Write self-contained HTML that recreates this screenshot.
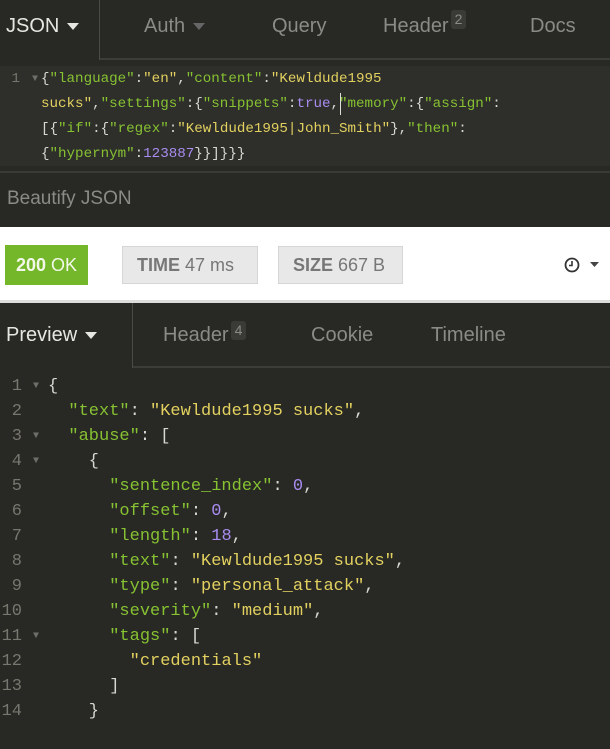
<!DOCTYPE html>
<html><head><meta charset="utf-8"><style>
*{margin:0;padding:0;box-sizing:border-box}
body{width:610px;height:729px;overflow:hidden;background:#282824;font-family:"Liberation Sans",sans-serif;position:relative}
.abs{position:absolute}
.tab{position:absolute;top:0;height:58px;line-height:52px;font-size:20px;color:#8a8a86}
.mono{font-family:"Liberation Mono","DejaVu Sans Mono",monospace;white-space:pre}
.k{color:#86c232}.s{color:#e2d160}.n{color:#a88cf0}.p{color:#d8d8d2}
.ln{position:absolute;width:22px;text-align:right;color:#77776f}
.ar{position:absolute;color:#6f6f69;font-size:10px}
.badge{display:inline-block;background:#3a3a36;color:#8a8a86;font-size:14px;line-height:19px;padding:0 4px;border-radius:3px;vertical-align:top;margin-top:-2px;margin-left:2px}
.box{position:absolute;top:246px;height:38px;line-height:36px;font-size:18px;background:#e8e8e8;border:1px solid #d6d6d6;color:#777}
.dd{display:inline-block;width:0;height:0;border-left:6px solid transparent;border-right:6px solid transparent;border-top:7px solid currentColor;vertical-align:middle;margin-left:8px}
</style></head><body>
<div class="abs" style="left:0;top:0;width:610px;height:66px;background:#282824"></div>
<div class="abs" style="left:99px;top:0;width:1px;height:60px;background:#4a4a46"></div>
<div class="abs" style="left:100px;top:58px;width:510px;height:2px;background:#3c3c38"></div>
<div class="tab" style="left:6px;color:#e6e6e2">JSON<span class="dd"></span></div>
<div class="tab" style="left:144px">Auth<span class="dd" style="color:#666"></span></div>
<div class="tab" style="left:272px">Query</div>
<div class="tab" style="left:383px">Header<span class="badge" style="margin-top:10px">2</span></div>
<div class="tab" style="left:530px">Docs</div>
<div class="abs" style="left:0;top:66px;width:610px;height:100px;background:#2e2e2a"></div>
<div class="abs" style="left:0;top:171px;width:610px;height:2px;background:#3a3a36"></div>
<div class="mono abs" style="left:0;top:67px;font-size:14.2px;line-height:25px">
<span class="ln" style="left:0;top:0;width:20px">1</span><span class="ar" style="left:32px;top:0">▼</span><div style="position:absolute;left:41px;top:0"><span class="p">{</span><span class="k">"language"</span><span class="p">:</span><span class="s">"en"</span><span class="p">,</span><span class="k">"content"</span><span class="p">:</span><span class="s">"Kewldude1995</span>
<span class="s">sucks"</span><span class="p">,</span><span class="k">"settings"</span><span class="p">:{</span><span class="k">"snippets"</span><span class="p">:</span><span class="n">true</span><span class="p">,</span><span class="k">"memory"</span><span class="p">:{</span><span class="k">"assign"</span><span class="p">:</span>
<span class="p">[{</span><span class="k">"if"</span><span class="p">:{</span><span class="k">"regex"</span><span class="p">:</span><span class="s">"Kewldude1995|John_Smith"</span><span class="p">},</span><span class="k">"then"</span><span class="p">:</span>
<span class="p">{</span><span class="k">"hypernym"</span><span class="p">:</span><span class="n">123887</span><span class="p">}}]}}}</span></div></div>
<div class="abs" style="left:340px;top:93px;width:1px;height:22px;background:#ddd"></div>
<div class="abs" style="left:7px;top:188px;font-size:19px;color:#8a8a86">Beautify JSON</div>
<div class="abs" style="left:0;top:227px;width:610px;height:75px;background:#fff"></div>
<div class="abs" style="left:0;top:300px;width:610px;height:3px;background:#ddd"></div>
<div class="abs" style="left:5px;top:245px;width:83px;height:40px;background:#75b72a;font-size:18px;line-height:40px;text-align:center;color:#f2f8ea"><b>200</b> OK</div>
<div class="box" style="left:122px;width:136px;padding-left:14px"><b>TIME</b> 47 ms</div>
<div class="box" style="left:278px;width:125px;padding-left:14px"><b>SIZE</b> 667 B</div>
<svg class="abs" style="left:564px;top:256px" width="40" height="18"><circle cx="8" cy="9" r="6.5" fill="none" stroke="#333" stroke-width="1.8"/><path d="M8 5v4.5h-3" fill="none" stroke="#333" stroke-width="1.6"/><path d="M26 6h9l-4.5 5z" fill="#444"/></svg>
<div class="abs" style="left:0;top:303px;width:610px;height:65px;background:#282824"></div>
<div class="abs" style="left:132px;top:303px;width:1px;height:65px;background:#4a4a46"></div>
<div class="abs" style="left:133px;top:366px;width:477px;height:2px;background:#3c3c38"></div>
<div class="tab" style="top:303px;left:6px;line-height:64px;color:#e6e6e2">Preview<span class="dd"></span></div>
<div class="tab" style="top:303px;left:163px;line-height:64px">Header<span class="badge" style="margin-top:18px">4</span></div>
<div class="tab" style="top:303px;left:311px;line-height:64px">Cookie</div>
<div class="tab" style="top:303px;left:431px;line-height:64px">Timeline</div>
<div class="mono abs" style="left:0;top:374px;font-size:17px;line-height:25px">
<span class="ln" style="top:0">1</span><span class="ar" style="left:33px;top:0">▼</span>
<span class="ln" style="top:25px">2</span>
<span class="ln" style="top:50px">3</span><span class="ar" style="left:33px;top:50px">▼</span>
<span class="ln" style="top:75px">4</span><span class="ar" style="left:33px;top:75px">▼</span>
<span class="ln" style="top:100px">5</span>
<span class="ln" style="top:125px">6</span>
<span class="ln" style="top:150px">7</span>
<span class="ln" style="top:175px">8</span>
<span class="ln" style="top:200px">9</span>
<span class="ln" style="top:225px">10</span>
<span class="ln" style="top:250px">11</span><span class="ar" style="left:33px;top:250px">▼</span>
<span class="ln" style="top:275px">12</span>
<span class="ln" style="top:300px">13</span>
<span class="ln" style="top:325px">14</span>
<div style="position:absolute;left:48px;top:0"><span class="p">{</span>
<span class="p">  </span><span class="k">"text"</span><span class="p">: </span><span class="s">"Kewldude1995 sucks"</span><span class="p">,</span>
<span class="p">  </span><span class="k">"abuse"</span><span class="p">: [</span>
<span class="p">    {</span>
<span class="p">      </span><span class="k">"sentence_index"</span><span class="p">: </span><span class="n">0</span><span class="p">,</span>
<span class="p">      </span><span class="k">"offset"</span><span class="p">: </span><span class="n">0</span><span class="p">,</span>
<span class="p">      </span><span class="k">"length"</span><span class="p">: </span><span class="n">18</span><span class="p">,</span>
<span class="p">      </span><span class="k">"text"</span><span class="p">: </span><span class="s">"Kewldude1995 sucks"</span><span class="p">,</span>
<span class="p">      </span><span class="k">"type"</span><span class="p">: </span><span class="s">"personal_attack"</span><span class="p">,</span>
<span class="p">      </span><span class="k">"severity"</span><span class="p">: </span><span class="s">"medium"</span><span class="p">,</span>
<span class="p">      </span><span class="k">"tags"</span><span class="p">: [</span>
<span class="p">        </span><span class="s">"credentials"</span>
<span class="p">      ]</span>
<span class="p">    }</span></div></div>
</body></html>
